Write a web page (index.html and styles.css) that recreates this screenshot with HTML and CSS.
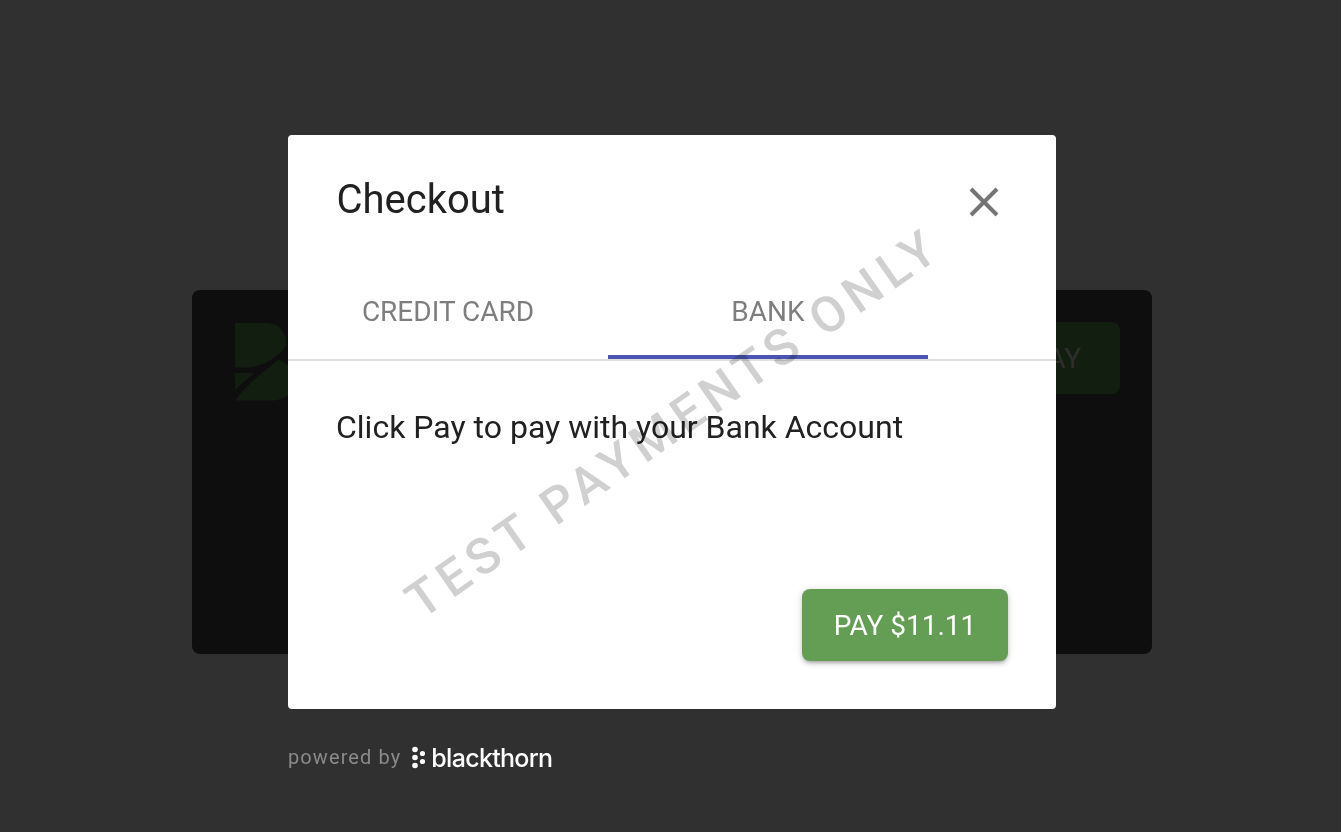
FILE: index.html
```html
<!DOCTYPE html>
<html lang="en">
<head>
<meta charset="utf-8">
<title>Checkout</title>
<link rel="stylesheet" href="styles.css">
</head>
<body>
<main class="page-card">
  <svg class="brand" viewBox="0 0 60 78" aria-hidden="true">
    <path class="brand-leaf" d="M0 0H32C44 0 51 9 51 19C51 25 47 29 41 33C33 40 22 44 12 44.5H0Z"/>
    <path class="brand-leaf" d="M0 50H20C13 55 6 61 0 67Z"/>
    <path class="brand-leaf" d="M0 77.500C12 62 26 50 43 37C54 40 60 48 60 58C60 70 50 77.500 36 77.500Z"/>
  </svg>
  <button class="page-pay" type="button">PAY</button>
</main>

<div class="overlay">
  <section class="modal">
    <header class="modal-head">
      <h1 class="modal-title">Checkout</h1>
      <button class="close" type="button" aria-label="Close">
        <svg viewBox="0 0 32 32" class="close-icon" aria-hidden="true"><path d="M3 3L29 29M29 3L3 29"/></svg>
      </button>
    </header>
    <nav class="tabs">
      <div class="tab">CREDIT CARD</div>
      <div class="tab tab-active">BANK</div>
    </nav>
    <div class="modal-body">
      <p class="message">Click Pay to pay with your Bank Account</p>
    </div>
    <footer class="modal-foot">
      <button class="pay" type="button">PAY $11.11</button>
    </footer>
    <div class="watermark">TEST PAYMENTS ONLY</div>
  </section>
  <div class="powered">
    <span class="powered-label">powered by</span>
    <svg class="bt-dots" viewBox="0 0 14 24" aria-hidden="true">
      <circle cx="4" cy="3.500" r="2.800"/><circle cx="4" cy="11.500" r="2.800"/><circle cx="4" cy="19.500" r="2.800"/><circle cx="11.500" cy="7.500" r="2.600"/><circle cx="11.500" cy="15.500" r="2.600"/>
    </svg>
    <span class="bt-name">blackthorn</span>
  </div>
</div>
</body>
</html>
```

FILE: styles.css
```css
* { box-sizing: border-box; }
html, body { height: 100%; }
body {
  margin: 0;
  background: #303030;
  font-family: Roboto, "Liberation Sans", sans-serif;
  overflow: hidden;
}
.page-card {
  width: 960px;
  height: 364px;
  margin: 290px 0 0 192px;
  padding: 32px;
  padding-left: 43px;
  background: #0e0e0e;
  border-radius: 8px;
  display: flex;
  justify-content: space-between;
  align-items: flex-start;
}
.brand { width: 60px; height: 78px; margin-top: 1px; }
.brand-leaf { fill: #121e10; }
.page-pay {
  width: 200px;
  height: 72px;
  border: 0;
  border-radius: 8px;
  background: #121e10;
  color: #2e2e2e;
  font: 400 28px Roboto, sans-serif;
  padding: 0 39px 0 0;
  text-align: right;
}
.overlay {
  position: fixed;
  inset: 0;
  padding: 135px 0 0 288px;
}
.modal {
  position: relative;
  width: 768px;
  height: 574px;
  background: #fff;
  border-radius: 4px;
  overflow: hidden;
  display: flex;
  flex-direction: column;
}
.modal-head {
  display: flex;
  justify-content: space-between;
  align-items: flex-start;
  height: 120px;
  padding: 40px 56px 0 48.500px;
}
.modal-title {
  margin: 0;
  font-size: 40px;
  font-weight: 400;
  line-height: 50px;
  color: #212121;
}
.close {
  border: 0;
  padding: 0;
  margin-top: 11px;
  background: none;
  width: 32px;
  height: 32px;
}
.close-icon { display: block; width: 32px; height: 32px; }
.close-icon path { fill: none; stroke: #757575; stroke-width: 4; }
.tabs {
  display: flex;
  height: 106px;
  border-bottom: 2px solid #e0e0e0;
}
.tab {
  width: 320px;
  height: 104px;
  padding-top: 40px;
  text-align: center;
  font-size: 28px;
  line-height: 34px;
  color: #7e7e7e;
}
.tab-active { border-bottom: 4px solid #4a55b3; }
.modal-body {
  flex: 1;
  padding: 46px 48px 0;
}
.message {
  margin: 0;
  font-size: 32px;
  line-height: 40px;
  color: #212121;
}
.modal-foot {
  display: flex;
  justify-content: flex-end;
  padding: 0 48px 48px;
}
.pay {
  width: 206px;
  height: 72px;
  border: 0;
  border-radius: 8px;
  background: #639e54;
  color: #fff;
  font: 400 28px Roboto, sans-serif;
  box-shadow: 0 3px 3px -2px rgba(0,0,0,.2), 0 3px 4px rgba(0,0,0,.14), 0 1px 8px rgba(0,0,0,.12);
}
.watermark {
  position: absolute;
  left: 66px;
  top: 256px;
  white-space: nowrap;
  font-size: 50px;
  font-weight: 500;
  line-height: 64px;
  letter-spacing: 6.600px;
  color: #d0d0d0;
  transform: rotate(-35deg);
  pointer-events: none;
  mix-blend-mode: multiply;
}
.powered {
  display: flex;
  align-items: center;
  height: 24px;
  margin-top: 37px;
}
.powered-label {
  font-size: 20px;
  letter-spacing: 1.100px;
  color: #8a8a8a;
  margin-right: 10px;
  margin-top: -2px;
}
.bt-dots { width: 14px; height: 24px; fill: #fff; margin-right: 6px; }
.bt-name {
  font-family: Inter, sans-serif;
  font-size: 25px;
  font-weight: 500;
  letter-spacing: -.7px;
  color: #fff;
}
```
